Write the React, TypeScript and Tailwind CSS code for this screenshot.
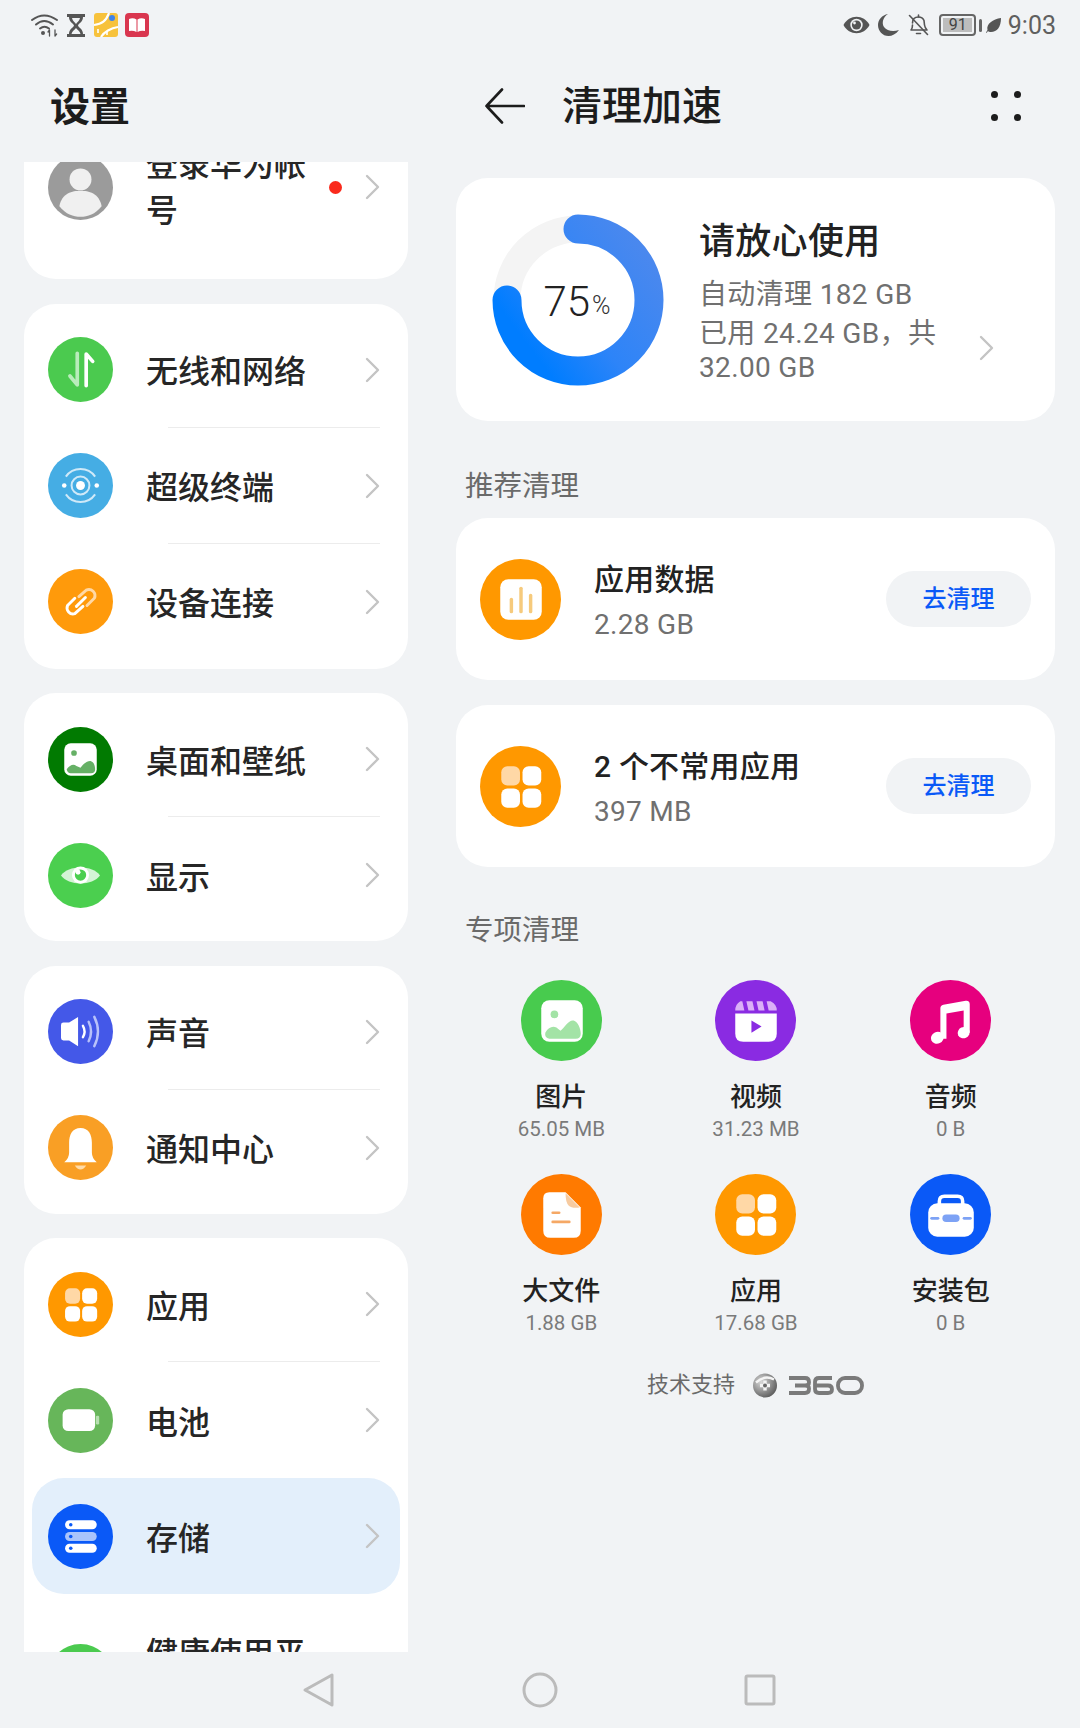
import type { ReactNode } from "react";

function Chevron({ className }: { className: string }) {
  return (
    <svg viewBox="0 0 15 26" className={className} fill="none" stroke="#c4c4c4" strokeWidth="2.4" strokeLinecap="round" strokeLinejoin="round">
      <path d="M2 2 L13 13 L2 24" />
    </svg>
  );
}

function Disc({ color, size, children }: { color: string; size: string; children: ReactNode }) {
  return (
    <svg viewBox="0 0 80 80" className={`${size} shrink-0`}>
      <circle cx="40" cy="40" r="40" fill={color} />
      {children}
    </svg>
  );
}

const GridGlyph = () => (
  <g>
    <rect x="21" y="20" width="18.5" height="19" rx="6" fill="#ffd8a6" />
    <rect x="42" y="20" width="18.5" height="19" rx="6" fill="#fff" />
    <rect x="21" y="42" width="18.5" height="19" rx="6" fill="#fff" />
    <rect x="42" y="42" width="18.5" height="19" rx="6" fill="#fff" />
  </g>
);

const NetGlyph = () => (
  <g fill="none" strokeLinecap="round" strokeLinejoin="round">
    <path d="M36 20 V59 L27 48" stroke="#b9ecbb" strokeWidth="4.5" />
    <path d="M47 60 V21 L55 30" stroke="#fff" strokeWidth="4.5" />
  </g>
);

const TerminalGlyph = () => (
  <g fill="none">
    <circle cx="40" cy="40" r="5.5" fill="#fff" />
    <circle cx="40" cy="40" r="11" stroke="#cfe9f8" strokeWidth="2.5" />
    <path d="M22 29 A22 22 0 0 1 58 29 M22 51 A22 22 0 0 0 58 51" stroke="#cfe9f8" strokeWidth="2.5" />
    <circle cx="20" cy="40" r="2.8" fill="#fff" />
    <circle cx="60" cy="40" r="2.8" fill="#fff" />
  </g>
);

const LinkGlyph = () => (
  <g fill="none" strokeWidth="3.6" strokeLinecap="round">
    <path d="M38 34 L47 26 A7.5 7.5 0 0 1 57 36 L48 45" stroke="#ffd8a6" />
    <path d="M43 46 L33 55 A7.5 7.5 0 0 1 24 45 L33 36" stroke="#fff" />
    <path d="M35 46 L46 35" stroke="#fff" />
  </g>
);

const WallGlyph = () => (
  <g>
    <rect x="20" y="20" width="40" height="40" rx="8" fill="#fff" />
    <circle cx="32" cy="32" r="3.5" fill="#66b066" />
    <path d="M23 52 C27 47 31 45 35 48 L40 50 C44 45 49 41 53 42 C56 43 58 47 58 52 Q58 57 53 57 L28 57 Q24 57 23 52 Z" fill="#66b066" />
  </g>
);

const EyeGlyph = () => (
  <g>
    <path d="M16 40 C25 27 55 27 64 40 C55 53 25 53 16 40 Z" fill="#d4f4d5" />
    <circle cx="40" cy="39.5" r="10.5" fill="#fff" />
    <circle cx="40" cy="39.5" r="7" fill="#4bcf4f" />
    <circle cx="37" cy="36" r="3" fill="#fff" />
  </g>
);

const SoundGlyph = () => (
  <g>
    <path d="M16 32 Q16 29 19 29 L26 29 L37 22 L37 58 L26 51 L19 51 Q16 51 16 48 Z" fill="#fff" />
    <g fill="none" strokeLinecap="round" strokeWidth="3">
      <path d="M43 33 Q47 40 43 47" stroke="#fff" />
      <path d="M50 28 Q56 40 50 52" stroke="#b8c2fa" />
      <path d="M57 22 Q66 40 57 58" stroke="#b8c2fa" />
    </g>
  </g>
);

const BellGlyph = () => (
  <g>
    <path d="M40 16 C30 16 26 24 26 34 L26 46 Q26 53 20 58 L60 58 Q54 53 54 46 L54 34 C54 24 50 16 40 16 Z" fill="#fff" />
    <path d="M33 62 H47 Q44 67 40 67 Q36 67 33 62 Z" fill="#ffdca8" />
  </g>
);

const BatteryGlyph = () => (
  <g>
    <rect x="18" y="26" width="40" height="27" rx="7" fill="#fff" />
    <rect x="59" y="34" width="4" height="11" rx="1.5" fill="#b6dfb0" />
  </g>
);

const StorageGlyph = () => (
  <g>
    <rect x="21" y="20" width="39" height="11" rx="5.5" fill="#fff" />
    <rect x="21" y="34.5" width="39" height="11" rx="5.5" fill="#a9c4fb" />
    <rect x="21" y="49" width="39" height="11" rx="5.5" fill="#fff" />
    <circle cx="28" cy="25.5" r="2.2" fill="#0a59f7" />
    <circle cx="28" cy="40" r="2.2" fill="#0a59f7" />
    <circle cx="28" cy="54.5" r="2.2" fill="#0a59f7" />
  </g>
);

const AvatarGlyph = () => (
  <g>
    <circle cx="40" cy="30" r="13.5" fill="#f0f0f0" />
    <path d="M14 63 C17 47 30 44 40 44 C50 44 63 47 66 63 C58 73 49 76 40 76 C31 76 22 73 14 63 Z" fill="#f0f0f0" />
  </g>
);

const PhotoGlyph = () => (
  <g>
    <rect x="20" y="20" width="41" height="41" rx="8" fill="#fff" />
    <circle cx="33" cy="34" r="3.8" fill="#a3e3a6" />
    <path d="M24 52 C27 47 31 45 35 47 L39 50 C43 47 47 39 52 40 C56 41 59 48 59 53 Q59 58 54 58 L28 58 Q23 57 24 52 Z" fill="#a3e3a6" />
  </g>
);

const VideoGlyph = () => (
  <g>
    <path d="M25 21 H27 L29 30 H20 Q20 24 25 21 Z" fill="#dbb0f7" />
    <path d="M31 21 H37 L39 30 H33 Z" fill="#dbb0f7" />
    <path d="M41 21 H47 L49 30 H43 Z" fill="#dbb0f7" />
    <path d="M51 21 H55 Q61 24 61 30 H53 Z" fill="#dbb0f7" />
    <path d="M20 33 H61 V53 Q61 61 53 61 H28 Q20 61 20 53 Z" fill="#fff" />
    <path d="M36 40 L46 46 L36 52 Z" fill="#8a2be2" />
  </g>
);

const MusicGlyph = () => (
  <g fill="#fff">
    <path d="M30 28 Q30 25 33 24.5 L55 20.5 Q59 20 59 24 V52 H53 V30 L36 33 V58 H30 Z" />
    <ellipse cx="27" cy="57" rx="6.5" ry="5.8" transform="rotate(-25 27 57)" />
    <ellipse cx="53" cy="52" rx="6" ry="5.5" transform="rotate(-25 53 52)" />
  </g>
);

const FileGlyph = () => (
  <g>
    <path d="M28 18 H44 L59 33 V56 Q59 63 52 63 H29 Q22 63 22 56 V24 Q22 18 28 18 Z" fill="#fff" />
    <path d="M44 19 L58 33 Q50 34 47 31 Q44 28 44 19 Z" fill="#f7cba0" />
    <rect x="30" y="37" width="9" height="2.6" rx="1.3" fill="#f5a865" />
    <rect x="30" y="46" width="19" height="2.6" rx="1.3" fill="#f5a865" />
  </g>
);

const CaseGlyph = () => (
  <g>
    <path d="M29 31 V27 Q29 22 34 22 H47 Q52 22 52 27 V31" fill="none" stroke="#fff" strokeWidth="3.5" />
    <rect x="18" y="29" width="45" height="33" rx="9" fill="#fff" />
    <rect x="20" y="42.5" width="9" height="2.6" rx="1.3" fill="#7da2f5" />
    <rect x="52" y="42.5" width="9" height="2.6" rx="1.3" fill="#7da2f5" />
    <rect x="32" y="40" width="17" height="7.5" rx="3.7" fill="#7da2f5" />
  </g>
);

const BarsGlyph = () => (
  <g>
    <rect x="20" y="20" width="41" height="40" rx="8" fill="#fff" />
    <g stroke="#f6ca7c" strokeWidth="3.4" strokeLinecap="round">
      <path d="M31 40 V52" />
      <path d="M40.5 29 V52" />
      <path d="M50 36 V52" />
    </g>
  </g>
);

function Row({
  label,
  color,
  glyph,
  divider,
  active,
}: {
  label: string;
  color: string;
  glyph: ReactNode;
  divider?: boolean;
  active?: boolean;
}) {
  return (
    <div className={active ? "relative mx-2 flex h-[116px] items-center rounded-[32px] bg-[#e3effb] pl-4 pr-5" : "relative flex h-[116px] items-center pl-6 pr-7"}>
      <Disc color={color} size="h-[65px] w-[65px]">
        {glyph}
      </Disc>
      <span className="ml-[33px] mt-[5px] flex-1 text-[32px] font-medium leading-[44px] text-[#262626]">{label}</span>
      <Chevron className="h-[26px] w-[15px]" />
      {divider && <span className="absolute bottom-0 left-[144px] right-[28px] h-px bg-[#ececec]" />}
    </div>
  );
}

function Card({ children, className }: { children: ReactNode; className: string }) {
  return <div className={`rounded-[32px] bg-white ${className}`}>{children}</div>;
}

function CleanCard({ title, sub, glyph }: { title: string; sub: string; glyph: ReactNode }) {
  return (
    <Card className="flex h-[162px] items-center pl-6 pr-6">
      <Disc color="#ff9800" size="h-[81px] w-[81px]">
        {glyph}
      </Disc>
      <div className="ml-[33px] mt-[6px] flex-1">
        <div className="text-[30px] font-medium leading-[42px] tracking-[0.2px] text-[#222]">{title}</div>
        <div className="mt-[3px] text-[28px] leading-[42px] tracking-[0.3px] text-[#707070]">{sub}</div>
      </div>
      <button className="h-14 w-[145px] rounded-full bg-[#f1f3f5] text-[24px] font-medium text-[#0a59f7]">去清理</button>
    </Card>
  );
}

function Tile({ color, glyph, label, value }: { color: string; glyph: ReactNode; label: string; value: string }) {
  return (
    <div className="flex flex-col items-center">
      <Disc color={color} size="h-[81px] w-[81px]">
        {glyph}
      </Disc>
      <div className="mt-[18px] text-[26px] font-medium leading-9 text-[#222]">{label}</div>
      <div className="text-[20.5px] leading-7 text-[#7a7a7a]">{value}</div>
    </div>
  );
}

function StatusLeft() {
  return (
    <div className="flex items-center pl-[31px]">
      <svg viewBox="0 0 27 23" className="h-[23px] w-[27px]" fill="none" stroke="#555" strokeWidth="2" strokeLinecap="round">
        <path d="M1 6 Q13 -3 26 6" />
        <path d="M5 10.5 Q13 3.5 22 10.5" />
        <path d="M9 14.5 Q13.5 11 18 14.5" />
        <circle cx="12" cy="19" r="2" fill="#555" stroke="none" />
        <path d="M18.5 16 V22 M18.5 16 L17 18 M24 22 V16 M24 22 L25.6 20" strokeWidth="1.3" />
      </svg>
      <svg viewBox="0 0 18 23" className="ml-[9px] h-[23px] w-[18px]" fill="#555">
        <path d="M0 0 H18 V3 H16 C16 8 12 9 11 11.5 C12 14 16 15 16 20 H18 V23 H0 V20 H2 C2 15 6 14 7 11.5 C6 9 2 8 2 3 H0 Z M5 4 C5.5 7 8 8.5 9 10 C10 8.5 12.5 7 13 4 Z" fillRule="evenodd" />
        <path d="M4.5 20 C5 17 8 15.5 9 14 C10 15.5 13 17 13.5 20 Z" fill="#f1f3f5" />
      </svg>
      <svg viewBox="0 0 24 24" className="ml-[9px] h-6 w-6">
        <rect width="24" height="24" rx="3" fill="#f7c23c" />
        <path d="M0 12 C8 11 12 8 15 0 M7 24 C10 19 17 15 24 14" fill="none" stroke="#fff" strokeWidth="2.2" />
        <circle cx="18" cy="5" r="3" fill="#3f82e8" />
        <path d="M4 16 V20 M13 19 V22" stroke="#fff" strokeWidth="1.6" />
      </svg>
      <svg viewBox="0 0 24 24" className="ml-[7px] h-6 w-6">
        <rect width="24" height="24" rx="4" fill="#d9364f" />
        <path d="M4 6 Q8 4.5 11.5 6.5 V19 Q8 17 4 18 Z M12.5 6.5 Q16 4.5 20 6 V18 Q16 17 12.5 19 Z" fill="#fff" />
      </svg>
    </div>
  );
}

function StatusRight() {
  return (
    <div className="flex items-center pr-6">
      <svg viewBox="0 0 27 18" className="h-[18px] w-[27px]">
        <path d="M0.5 9 C6 -2 21 -2 26.5 9 C21 20 6 20 0.5 9 Z" fill="#555" />
        <circle cx="13.5" cy="9" r="6.2" fill="#f1f3f5" />
        <circle cx="13.5" cy="9" r="4.6" fill="#555" />
        <circle cx="11.5" cy="7" r="1.4" fill="#f1f3f5" />
      </svg>
      <svg viewBox="0 0 21 22" className="ml-2 h-[22px] w-[21px]">
        <path d="M10 0 C5 3 3.5 9 6 13 C9 17 15 18 21 16 C18 20 14 22 10.5 22 C4.5 22 0 17 0 11 C0 6 4 1 10 0 Z" fill="#555" />
      </svg>
      <svg viewBox="0 0 21 22" className="ml-[9px] h-[22px] w-[21px]" fill="none" stroke="#555" strokeWidth="1.6" strokeLinecap="round" strokeLinejoin="round">
        <path d="M4.5 9 C4.5 5 7 3 10.5 3 C13 3 15 4 16 6.5 L16.5 11 C16.8 13 18 15 19 16 H3 C4 15 4.5 13 4.5 11" />
        <path d="M10.5 1 V3 M8.5 19.5 H12.5" />
        <path d="M1.5 1.5 L19.5 20.5" />
      </svg>
      <div className="ml-2.5 flex h-[22px] w-[37px] items-center justify-center rounded-[4px] border-2 border-[#666] p-[2px]">
        <div className="flex h-full w-full items-center justify-center bg-[#bdbdbd] text-[16px] leading-none text-[#444]">91</div>
      </div>
      <div className="ml-[3px] h-[13px] w-[2.5px] rounded-sm bg-[#666]" />
      <svg viewBox="0 0 15 15" className="ml-1 h-[15px] w-[15px]">
        <path d="M15 0 C15 9 11 14 5 14 C3.5 14 2.5 13.6 2 13 L0.5 15 L0 14.4 L1.5 12 C0 6 7 1 15 0 Z" fill="#555" />
      </svg>
      <span className="ml-[7px] text-[25px] leading-none text-[#5f5f5f]">9:03</span>
    </div>
  );
}

function Ring() {
  return (
    <div className="relative h-[172px] w-[172px] shrink-0">
      <svg viewBox="0 0 172 172" className="h-full w-full" fill="none">
        <defs>
          <linearGradient id="ring" gradientUnits="userSpaceOnUse" x1="140" y1="20" x2="20" y2="110">
            <stop offset="0" stopColor="#4a88ee" />
            <stop offset="0.6" stopColor="#2d84f8" />
            <stop offset="1" stopColor="#007dff" />
          </linearGradient>
        </defs>
        <circle cx="86" cy="86" r="71" stroke="#f4f4f4" strokeWidth="27" />
        <path d="M86 15 A71 71 0 1 1 15 86" stroke="url(#ring)" strokeWidth="29" strokeLinecap="round" />
      </svg>
      <div className="absolute inset-0 flex items-center justify-center pr-[2px] pt-[3px]">
        <span className="text-[42px] font-light leading-none text-[#222]">75</span>
        <span className="ml-[2px] mt-2 text-[25px] font-light leading-none text-[#333]">%</span>
      </div>
    </div>
  );
}

function Logo360() {
  return (
    <div className="ml-[18px] flex items-center">
      <svg viewBox="0 0 24 24" className="h-[25px] w-6">
        <defs>
          <radialGradient id="ball" cx="0.35" cy="0.35" r="0.8">
            <stop offset="0" stopColor="#d8d8d8" />
            <stop offset="1" stopColor="#4c4c4c" />
          </radialGradient>
        </defs>
        <circle cx="12" cy="12" r="12" fill="url(#ball)" />
        <path d="M3 9 Q12 1 21 6" stroke="#f4f4f4" strokeWidth="2.4" fill="none" />
        <path d="M12 7 V17 M7 12 H17" stroke="#f4f4f4" strokeWidth="3.4" />
        <circle cx="12" cy="12" r="2" fill="#666" />
      </svg>
      <svg viewBox="0 0 76 19" className="ml-[11px] h-[19px] w-[76px]" fill="none" stroke="#7a7a7a" strokeWidth="3.8">
        <path d="M1 2 H17 Q21 2 21 6 V6.5 Q21 9.5 17 9.5 H7 M17 9.5 Q21 9.5 21 12.5 V13 Q21 17 17 17 H1" />
        <path d="M44 2 H31 Q27 2 27 6 V13 Q27 17 31 17 H40 Q44 17 44 13.5 Q44 9.5 40 9.5 H28" />
        <rect x="50" y="2" width="24" height="15" rx="7" />
      </svg>
    </div>
  );
}

export default function App() {
  return (
    <div className="h-[1728px] w-[1080px] overflow-hidden bg-[#f1f3f5] font-['Roboto','Noto_Sans_CJK_SC',sans-serif]">
      <div className="flex h-[50px] items-center justify-between">
        <StatusLeft />
        <StatusRight />
      </div>

      <div className="flex h-[1602px]">
        <div className="flex w-[432px] flex-col">
          <div className="flex h-[112px] shrink-0 items-center pl-[50px] pt-[3px]">
            <h1 className="text-[40px] font-bold text-[#1c1c1c]">设置</h1>
          </div>
          <div className="flex-1 overflow-hidden px-6">
            <div className="flex flex-col gap-[24.5px]">
              <Card className="-mt-[50px] h-[167px] pt-[2px]">
                <div className="flex h-[146px] items-center pl-6 pr-7">
                  <Disc color="#9b9b9b" size="h-[65px] w-[65px]">
                    <AvatarGlyph />
                  </Disc>
                  <span className="ml-[33px] mt-[2px] w-[170px] text-[32px] font-medium leading-[46px] text-[#262626]">登录华为帐号</span>
                  <span className="ml-[13px] h-[13px] w-[13px] rounded-full bg-[#fa2a1c]" />
                  <span className="flex-1" />
                  <Chevron className="h-[26px] w-[15px]" />
                </div>
              </Card>
              <Card className="pb-[9px] pt-2">
                <Row label="无线和网络" color="#4bca4f" glyph={<NetGlyph />} divider />
                <Row label="超级终端" color="#45ade4" glyph={<TerminalGlyph />} divider />
                <Row label="设备连接" color="#ff9a0b" glyph={<LinkGlyph />} />
              </Card>
              <Card className="pb-2 pt-2">
                <Row label="桌面和壁纸" color="#017a01" glyph={<WallGlyph />} divider />
                <Row label="显示" color="#4bcf4f" glyph={<EyeGlyph />} />
              </Card>
              <Card className="pb-2 pt-2">
                <Row label="声音" color="#4458e8" glyph={<SoundGlyph />} divider />
                <Row label="通知中心" color="#f99f25" glyph={<BellGlyph />} />
              </Card>
              <Card className="pt-2">
                <Row label="应用" color="#ff9800" glyph={<GridGlyph />} divider />
                <Row label="电池" color="#67b65a" glyph={<BatteryGlyph />} />
                <Row label="存储" color="#0a59f7" glyph={<StorageGlyph />} active />
                <div className="flex h-[164px] items-center pl-6 pr-7">
                  <Disc color="#4bca4f" size="h-[65px] w-[65px]">
                    <GridGlyph />
                  </Disc>
                  <span className="ml-[33px] w-[170px] text-[32px] font-medium leading-[44px] text-[#262626]">健康使用平板</span>
                </div>
              </Card>
            </div>
          </div>
        </div>

        <div className="flex w-[648px] flex-col pl-6 pr-[25px]">
          <div className="-ml-6 -mr-[25px] flex h-[112px] shrink-0 items-center pl-[53px] pr-[59px]">
            <svg viewBox="0 0 40 36" className="h-9 w-10" fill="none" stroke="#1c1c1c" strokeWidth="2.6" strokeLinecap="round" strokeLinejoin="round">
              <path d="M39 18 H1.5 M17 1.5 L1.5 18 L17 34.5" />
            </svg>
            <h2 className="ml-[37px] mt-[2px] flex-1 text-[40px] font-medium text-[#1c1c1c]">清理加速</h2>
            <div className="grid grid-cols-2 gap-x-[16px] gap-y-[16px]">
              <span className="h-[7px] w-[7px] rounded-full bg-[#1c1c1c]" />
              <span className="h-[7px] w-[7px] rounded-full bg-[#1c1c1c]" />
              <span className="h-[7px] w-[7px] rounded-full bg-[#1c1c1c]" />
              <span className="h-[7px] w-[7px] rounded-full bg-[#1c1c1c]" />
            </div>
          </div>

          <Card className="mt-4 flex h-[243px] items-start pl-9">
            <div className="mt-9">
              <Ring />
            </div>
            <div className="ml-[35px] mt-10 w-[245px]">
              <div className="text-[36px] font-medium leading-[48px] tracking-[0.3px] text-[#222]">请放心使用</div>
              <div className="mt-[11px] text-[28px] leading-9 tracking-[0.35px] text-[#707070]">自动清理 182 GB</div>
              <div className="mt-1 text-[28px] leading-[34px] tracking-[0.35px] text-[#707070]">已用 24.24 GB，共 32.00 GB</div>
            </div>
            <Chevron className="ml-[35px] mt-[157px] h-[26px] w-[15px]" />
          </Card>

          <div className="pb-[11px] pl-[9px] pt-[46px] text-[28.5px] leading-10 text-[#6a6a6a]">推荐清理</div>
          <div className="flex flex-col gap-[25px]">
            <CleanCard title="应用数据" sub="2.28 GB" glyph={<BarsGlyph />} />
            <CleanCard title="2 个不常用应用" sub="397 MB" glyph={<GridGlyph />} />
          </div>

          <div className="pb-[29px] pl-[9px] pt-[44px] text-[28.5px] leading-10 text-[#6a6a6a]">专项清理</div>
          <div className="ml-2 grid w-[584px] grid-cols-3 gap-y-[31px]">
            <Tile color="#48cb4e" glyph={<PhotoGlyph />} label="图片" value="65.05 MB" />
            <Tile color="#8a2be2" glyph={<VideoGlyph />} label="视频" value="31.23 MB" />
            <Tile color="#e6007e" glyph={<MusicGlyph />} label="音频" value="0 B" />
            <Tile color="#ff7a00" glyph={<FileGlyph />} label="大文件" value="1.88 GB" />
            <Tile color="#ff9800" glyph={<GridGlyph />} label="应用" value="17.68 GB" />
            <Tile color="#0a59f7" glyph={<CaseGlyph />} label="安装包" value="0 B" />
          </div>

          <div className="mt-[35px] flex h-[26px] items-center justify-center">
            <span className="text-[22px] leading-none text-[#6a6a6a]">技术支持</span>
            <Logo360 />
          </div>
        </div>
      </div>

      <div className="flex h-[76px] items-center">
        <svg viewBox="0 0 34 36" className="ml-[302px] h-9 w-[34px]" fill="none" stroke="#bbb" strokeWidth="3" strokeLinejoin="round">
          <path d="M30 3 V33 L3 18 Z" />
        </svg>
        <svg viewBox="0 0 36 36" className="ml-[186px] h-9 w-9" fill="none" stroke="#bbb" strokeWidth="3">
          <circle cx="18" cy="18" r="16" />
        </svg>
        <svg viewBox="0 0 32 32" className="ml-[186px] h-8 w-8" fill="none" stroke="#bbb" strokeWidth="3" strokeLinejoin="round">
          <rect x="2" y="2" width="28" height="28" rx="1.5" />
        </svg>
      </div>
    </div>
  );
}
